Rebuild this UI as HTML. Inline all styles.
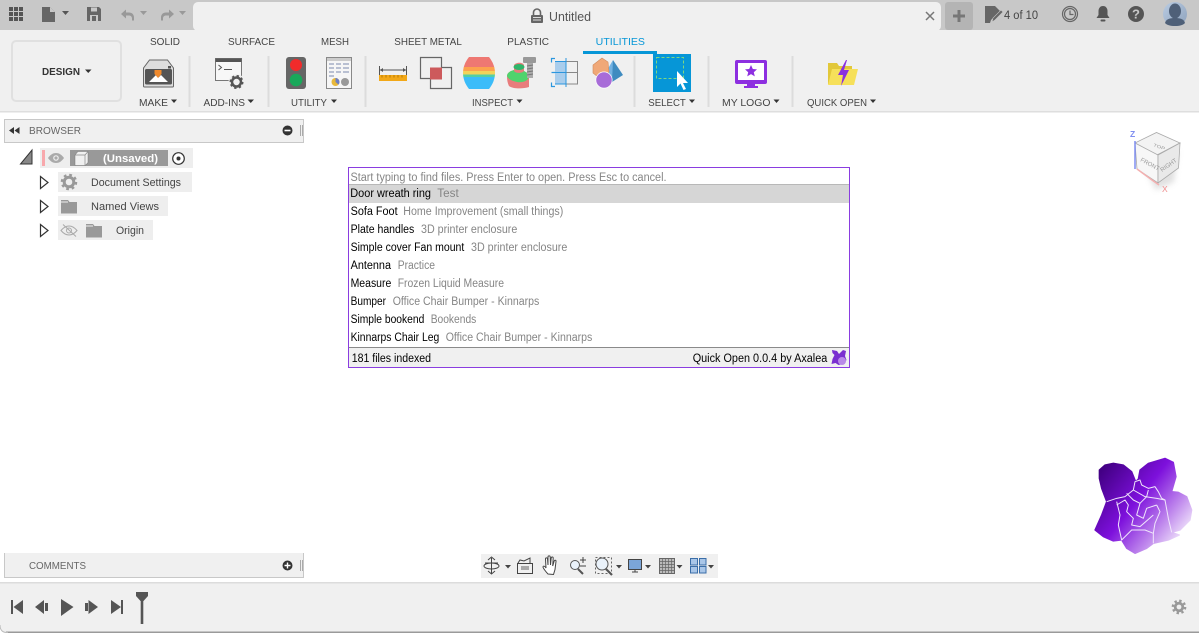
<!DOCTYPE html>
<html><head><meta charset="utf-8"><title>Untitled</title>
<style>
html,body{margin:0;padding:0;background:#fff;width:1199px;height:633px;overflow:hidden}
svg{display:block}
text{font-family:"Liberation Sans",sans-serif}
.t{font-size:10.5px;fill:#444}
.d{font-size:11.5px;fill:#000}
.g{font-size:11.5px;fill:#858585}
.tr{font-size:11px;fill:#444}
</style></head><body>
<svg width="1199" height="633" viewBox="0 0 1199 633" xmlns="http://www.w3.org/2000/svg">
<defs>
<linearGradient id="fl" gradientUnits="userSpaceOnUse" x1="40" y1="40" x2="300" y2="245"><stop offset="0" stop-color="#430085"/><stop offset=".42" stop-color="#7d10dc"/><stop offset=".72" stop-color="#bd84ec"/><stop offset="1" stop-color="#fbf8fe"/></linearGradient>
<filter id="bl" x="-30%" y="-30%" width="160%" height="160%"><feGaussianBlur stdDeviation="3"/></filter>
<linearGradient id="av" x1="0" y1="0" x2="1" y2="1"><stop offset="0" stop-color="#b9cbe2"/><stop offset="1" stop-color="#8fa3bd"/></linearGradient>
</defs>

<!-- title bar -->
<rect width="1199" height="30" fill="#c8c8c8"/>
<rect x="193" y="2" width="748" height="29" rx="5" fill="#f0f0f0"/>
<rect y="30" width="1199" height="81" fill="#f0f0f0"/>
<rect y="111" width="1199" height="1.5" fill="#dedede"/>
<g fill="#555"><rect x="9" y="7" width="4" height="4"/><rect x="14" y="7" width="4" height="4"/><rect x="19" y="7" width="4" height="4"/><rect x="9" y="12" width="4" height="4"/><rect x="14" y="12" width="4" height="4"/><rect x="19" y="12" width="4" height="4"/><rect x="9" y="17" width="4" height="4"/><rect x="14" y="17" width="4" height="4"/><rect x="19" y="17" width="4" height="4"/></g>
<path d="M42 7h8l5 5v10H42z" fill="#666"/><path d="M50 7v5h5z" fill="#c8c8c8"/>
<path d="M62 11h7l-3.500 4z" fill="#555"/>
<path d="M87 7h12l2 2v12H87z" fill="#666"/><rect x="91" y="7.500" width="6" height="4" fill="#c8c8c8"/><rect x="90" y="15" width="8" height="6" fill="#c8c8c8"/><rect x="92" y="16" width="4" height="5" fill="#666"/>
<path d="M121 14l5-4.500v3h3c3 0 5 2 5 5v3h-2v-2c0-2-1.500-3-3-3h-3v3z" fill="#999"/>
<path d="M140 11h7l-3.500 4z" fill="#999"/>
<path d="M174 14l-5-4.500v3h-3c-3 0-5 2-5 5v3h2v-2c0-2 1.500-3 3-3h3v3z" fill="#999"/>
<path d="M179 11h7l-3.500 4z" fill="#999"/>
<path d="M533.500 15v-2.500a3.500 3.500 0 0 1 7 0V15" fill="none" stroke="#666" stroke-width="1.600"/>
<rect x="531" y="15" width="12" height="8" rx="1" fill="#666"/><rect x="533" y="17" width="8" height="1" fill="#ddd"/><rect x="533" y="19.500" width="8" height="1" fill="#ddd"/>
<text x="549" y="21" font-size="12.500" fill="#555" textLength="42" lengthAdjust="spacingAndGlyphs">Untitled</text>
<path d="M926 12l8 8m0-8l-8 8" stroke="#777" stroke-width="1.500" fill="none"/>
<rect x="945" y="2" width="28" height="28" rx="3" fill="#b4b4b4"/>
<path d="M959 10v12m-6-6h12" stroke="#777" stroke-width="3" fill="none"/>
<path d="M985 6h10l5 5-9 9-1 3h-5z" fill="#666"/><path d="M992 22l1-4 8-8 2 2-8 8z" fill="#666" stroke="#c8c8c8" stroke-width=".6"/>
<text x="1004" y="19" font-size="11.500" fill="#444" textLength="34" lengthAdjust="spacingAndGlyphs">4 of 10</text>
<circle cx="1070" cy="14" r="7.500" fill="none" stroke="#666" stroke-width="1.200"/><circle cx="1070" cy="14" r="5.500" fill="none" stroke="#666" stroke-width="1.200"/><path d="M1070 10.500V14.500h3.500" fill="none" stroke="#666" stroke-width="1.200"/>
<path d="M1103 6c-3 0-4.500 2.500-4.500 5v4l-2 3h13l-2-3v-4c0-2.500-1.500-5-4.500-5z" fill="#555"/><rect x="1100.500" y="19.500" width="5" height="2" rx="1" fill="#555"/>
<circle cx="1136" cy="14" r="8" fill="#555"/><text x="1136" y="18.500" font-size="13" font-weight="bold" fill="#c8c8c8" text-anchor="middle">?</text>
<circle cx="1175" cy="14" r="12" fill="url(#av)"/><ellipse cx="1175" cy="11" rx="6" ry="7.500" fill="#4f6078"/><path d="M1165 23c1-4 5-5 10-5s9 1 10 5c-2 2-5 3-10 3s-8-1-10-3z" fill="#4f6078"/>

<!-- design -->
<rect x="12" y="41" width="109" height="60" rx="4" fill="#f0f0f0" stroke="#e0e0e0" stroke-width="2"/>
<text x="42" y="75" font-size="10.500" font-weight="bold" fill="#333" textLength="38" lengthAdjust="spacingAndGlyphs">DESIGN</text>
<path d="M85 69.500h6.500l-3.250 3.500z" fill="#333"/>
<!-- tabs -->
<text class="t" x="150" y="45" textLength="30" lengthAdjust="spacingAndGlyphs">SOLID</text>
<text class="t" x="228" y="45" textLength="47" lengthAdjust="spacingAndGlyphs">SURFACE</text>
<text class="t" x="321" y="45" textLength="28" lengthAdjust="spacingAndGlyphs">MESH</text>
<text class="t" x="394.300" y="45" textLength="67.500" lengthAdjust="spacingAndGlyphs">SHEET METAL</text>
<text class="t" x="507.300" y="45" textLength="41.700" lengthAdjust="spacingAndGlyphs">PLASTIC</text>
<text x="595.700" y="45" font-size="10.500" fill="#0696d7" textLength="49.300" lengthAdjust="spacingAndGlyphs">UTILITIES</text>
<rect x="583" y="51" width="74" height="3" fill="#0696d7"/>
<g fill="#dcdcdc"><rect x="188.500" y="56" width="2" height="51"/><rect x="267.500" y="56" width="2" height="51"/><rect x="364.500" y="56" width="2" height="51"/><rect x="633.500" y="56" width="2" height="51"/><rect x="707.500" y="56" width="2" height="51"/><rect x="791.500" y="56" width="2" height="51"/></g>
<text class="t" x="139" y="106" textLength="29" lengthAdjust="spacingAndGlyphs">MAKE</text><path d="M171 99.500h6l-3 3.500z" fill="#333"/>
<text class="t" x="203.500" y="106" textLength="41.500" lengthAdjust="spacingAndGlyphs">ADD-INS</text><path d="M247.500 99.500h6.500l-3.250 3.500z" fill="#333"/>
<text class="t" x="291" y="106" textLength="36" lengthAdjust="spacingAndGlyphs">UTILITY</text><path d="M331 99.500h6l-3 3.500z" fill="#333"/>
<text class="t" x="472" y="106" textLength="41" lengthAdjust="spacingAndGlyphs">INSPECT</text><path d="M516.500 99.500h6l-3 3.500z" fill="#333"/>
<text class="t" x="648.300" y="106" textLength="37.500" lengthAdjust="spacingAndGlyphs">SELECT</text><path d="M689 99.500h6l-3 3.500z" fill="#333"/>
<text class="t" x="722" y="106" textLength="48.500" lengthAdjust="spacingAndGlyphs">MY LOGO</text><path d="M773.500 99.500h6l-3 3.500z" fill="#333"/>
<text class="t" x="807" y="106" textLength="60" lengthAdjust="spacingAndGlyphs">QUICK OPEN</text><path d="M870 99.500h6l-3 3.500z" fill="#333"/>

<path d="M143.500 68l6-8h18l6 8v18a1 1 0 0 1-1 1h-28a1 1 0 0 1-1-1z" fill="#ddd" stroke="#666"/>
<rect x="145" y="69" width="27" height="15.500" rx="1.500" fill="#555"/><rect x="168" y="66" width="3" height="2.500" fill="#555"/>
<path d="M149 82l7-7 2.500 2.500L161 75l7 7z" fill="#fff"/><path d="M154.500 70h7v4l-3.500 4-3.500-4z" fill="#ef8a2e"/>
<rect x="215.500" y="58.500" width="26" height="22" fill="#f7f7f7" stroke="#777"/><rect x="215.500" y="58.500" width="26" height="3.500" fill="#555"/>
<path d="M218.500 65l3 2.500-3 2.500M224 69.500h8" fill="none" stroke="#555" stroke-width="1"/>
<circle cx="236.500" cy="82" r="8" fill="#f0f0f0"/><circle cx="236.500" cy="82" r="4.500" fill="none" stroke="#555" stroke-width="2.500"/><circle cx="236.500" cy="82" r="6" fill="none" stroke="#555" stroke-width="2" stroke-dasharray="2.300 2.400"/>
<rect x="286" y="57" width="20" height="32" rx="3" fill="#666"/><circle cx="296" cy="65" r="6" fill="#f22b2b"/><circle cx="296" cy="80" r="6.300" fill="#19a85a"/>
<rect x="326.500" y="57.500" width="25" height="31" fill="#f6f6f6" stroke="#888"/><rect x="327" y="58" width="24" height="3" fill="#ccc"/>
<g fill="#b9c0d2"><rect x="329" y="63" width="5" height="2"/><rect x="336" y="63" width="5" height="2"/><rect x="343" y="63" width="6" height="2"/><rect x="329" y="67" width="5" height="2"/><rect x="336" y="67" width="5" height="2"/><rect x="343" y="67" width="6" height="2"/><rect x="329" y="71" width="5" height="2"/><rect x="336" y="71" width="5" height="2"/><rect x="343" y="71" width="6" height="2"/><rect x="329" y="75" width="5" height="2"/></g>
<circle cx="335.500" cy="82" r="4" fill="#e8b83a"/><path d="M335.500 82v-4a4 4 0 0 1 3 6.600z" fill="#6d7fc4"/><circle cx="345" cy="82" r="4" fill="#999"/>
<path d="M379.500 66v9M406.500 66v9" stroke="#555" fill="none"/><path d="M380 70h26" stroke="#555" fill="none"/><path d="M380 70l3-2v4zM406 70l-3-2v4z" fill="#555"/>
<rect x="379" y="75" width="28" height="6" fill="#f2a818"/><path d="M382 75v2.500M386 75v2.500M390 75v2.500M394 75v2.500M398 75v2.500M402 75v2.500" stroke="#a66f00" stroke-width=".8"/>
<path d="M441.500 67.500V57.500H420.500v21H430" fill="none" stroke="#666" stroke-width="1.200"/><path d="M441.500 67.500H451.500v21H430.500V78.500" fill="none" stroke="#666" stroke-width="1.200"/><rect x="430" y="67.500" width="12" height="12" fill="#cd5a5c"/>
<clipPath id="z"><path d="M469 57h20c8 10 8 22 0 32h-20c-8-10-8-22 0-32z"/></clipPath>
<g clip-path="url(#z)"><rect x="460" y="57" width="38" height="10.500" fill="#ee7872"/><rect x="460" y="67" width="38" height="4" fill="#fca24e"/><rect x="460" y="71" width="38" height="3.500" fill="#f2d35a"/><rect x="460" y="74.500" width="38" height="2.500" fill="#52cfa5"/><rect x="460" y="77" width="38" height="12" fill="#3bbcf9"/></g>
<path d="M507 76c0-3 3-5 7-6v-5c2-3 9-3 10 0v6l5 3v13c-6 2-16 2-20-1-1.500-3-2-6-2-10z" fill="#e87c7c"/>
<path d="M507 76c1 3 5 5 10 6 5 1 11-1 12-5v-3l-5-3c-1 2-8 3-10 0v-1c-4 1-7 3-7 6z" fill="#50d36d"/>
<ellipse cx="519" cy="67" rx="5.500" ry="3" fill="#2fb56a"/>
<rect x="523" y="57" width="13" height="6" rx="1" fill="#999"/><rect x="527" y="63" width="6" height="15" fill="#aaa"/><path d="M527 66l6-1M527 69l6-1M527 72l6-1M527 75l6-1" stroke="#777"/>
<rect x="555" y="61" width="11" height="11" fill="#a9cdec"/><rect x="555" y="73" width="11" height="11" fill="#a9cdec"/>
<path d="M566 61.500h11.500v22.500H566M566 72.500h11.500" fill="none" stroke="#888"/>
<path d="M555 58.500h-3.500v4M555 86.500h-3.500v-4M555 72.500h-3.500" fill="none" stroke="#2b96de" stroke-width="1.200"/><path d="M566 58v29M555 61.500h11M555 84h11M555 72.500h11" stroke="#2b96de" fill="none"/>
<!-- shapes -->
<path d="M613 60l-7 12 6 10 2-2z" fill="#74b2e2"/><path d="M613 60l10 15-11 7z" fill="#3f8bc0"/>
<path d="M593 65l9-7 6 4 1 10-3 3-8 2-5-4z" fill="#f0a878" stroke="#d18a5c" stroke-width=".6"/>
<circle cx="604" cy="80" r="8.500" fill="#fff"/><circle cx="604" cy="80" r="7.800" fill="#a86cd8"/>
<!-- select -->
<rect x="653" y="54" width="38" height="38" fill="#0696d7"/>
<rect x="656.500" y="57.500" width="27" height="21" fill="none" stroke="#7fd87f" stroke-dasharray="3 2"/>
<path d="M677 71v16l3.500-3.500 3 6.500 2.500-1-3-6h5z" fill="#fff"/>
<rect x="735" y="60" width="32" height="24" rx="2" fill="#8d2fe0"/><rect x="738" y="63" width="26" height="17" fill="#fff"/>
<path d="M751 65l1.800 4 4.200.4-3.200 2.800 1 4.200-3.800-2.300-3.800 2.300 1-4.200-3.200-2.800 4.200-.4z" fill="#8d2fe0"/>
<path d="M747 84h8v2h3v2h-14v-2h3z" fill="#8d2fe0"/>
<path d="M828 63h9l2 3h13v18h-24z" fill="#e2c83a"/><path d="M832 69h26l-4 16h-26z" fill="#f6e05a"/>
<path d="M846 60l-8 15h5l-2 11 8-16h-5l3-10z" fill="#8a2fe0"/>

<!-- browser -->
<rect x="4.500" y="119.500" width="299" height="23" fill="#f0f0f0" stroke="#c8c8c8"/>
<path d="M9 130.500l5-3.500v7zM14.500 130.500l5-3.500v7z" fill="#333"/>
<text x="29" y="134" font-size="10.500" fill="#666" textLength="52" lengthAdjust="spacingAndGlyphs">BROWSER</text>
<circle cx="287.500" cy="130.500" r="5" fill="#333"/><rect x="284.500" y="129.700" width="6" height="1.600" fill="#fff"/>
<path d="M300.500 125v11M302.500 125v11" stroke="#aaa" fill="none"/>
<path d="M32 150v14H20.500z" fill="#888" stroke="#333" stroke-width="1"/>
<rect x="40" y="148" width="153" height="20" fill="#eee"/>
<rect x="42" y="150" width="3" height="16" fill="#f8a8ac"/>
<path d="M48 158c2.500-3.500 5-5 8-5s5.500 1.500 8 5c-2.500 3.500-5 5-8 5s-5.500-1.500-8-5z" fill="#aaa"/><circle cx="56" cy="158" r="2.800" fill="#eee"/><circle cx="56" cy="158" r="1.600" fill="#aaa"/>
<rect x="70" y="150" width="98" height="16" fill="#999"/>
<path d="M75 155l3-3.500h10v11l-3 3H75z" fill="#f0f0f0" stroke="#777" stroke-width=".5"/><path d="M75 155h10v11" fill="none" stroke="#888" stroke-width=".7"/><path d="M85 155l3-3.500" stroke="#888" stroke-width=".7"/>
<text x="103" y="162" font-size="11" font-weight="bold" fill="#fff" textLength="55" lengthAdjust="spacingAndGlyphs">(Unsaved)</text>
<circle cx="178.500" cy="158.500" r="5.800" fill="#fff" stroke="#333" stroke-width="1.200"/><circle cx="178.500" cy="158.500" r="2" fill="#333"/>

<path d="M40.500 176.500v12l7.500-6z" fill="#fff" stroke="#333" stroke-width="1.200"/>
<rect x="58" y="172" width="134" height="20" fill="#eee"/>
<circle cx="69" cy="182" r="4.800" fill="none" stroke="#999" stroke-width="3"/><circle cx="69" cy="182" r="7" fill="none" stroke="#999" stroke-width="2.500" stroke-dasharray="2.700 2.800"/>
<text class="tr" x="91" y="186" textLength="90" lengthAdjust="spacingAndGlyphs">Document Settings</text>

<path d="M40.500 200.500v12l7.500-6z" fill="#fff" stroke="#333" stroke-width="1.200"/>
<rect x="58" y="196" width="110" height="20" fill="#eee"/>
<path d="M61 200h7l1.500 2H77v11.500H61z" fill="#999"/><rect x="61" y="201.500" width="7" height="1" fill="#eee"/>
<text class="tr" x="91" y="210" textLength="68" lengthAdjust="spacingAndGlyphs">Named Views</text>

<path d="M40.500 224.500v12l7.500-6z" fill="#fff" stroke="#333" stroke-width="1.200"/>
<rect x="58" y="220" width="95" height="20" fill="#eee"/>
<path d="M61 230.500c2.500-3 5-4.500 8-4.500s5.500 1.500 8 4.500c-2.500 3-5 4.500-8 4.500s-5.500-1.500-8-4.500z" fill="none" stroke="#aaa"/><circle cx="69" cy="230.500" r="2.500" fill="none" stroke="#aaa"/><path d="M63 224.500l13 12" stroke="#aaa"/>
<path d="M86 224h7l1.500 2H102v11.500H86z" fill="#999"/><rect x="86" y="225.500" width="7" height="1" fill="#eee"/>
<text class="tr" x="116" y="234" textLength="28" lengthAdjust="spacingAndGlyphs">Origin</text>

<!-- dialog -->
<rect x="348.500" y="167.500" width="501" height="200" fill="#fff" stroke="#8a3de0"/>
<rect x="349" y="184" width="500" height="1" fill="#b8b8b8"/>
<rect x="349" y="185" width="500" height="18" fill="#d6d6d6"/>
<rect x="349" y="348" width="500" height="19" fill="#f0f0f0"/>
<rect x="349" y="347" width="500" height="1" fill="#8a8a8a"/>
<text class="g" x="350.500" y="181" textLength="316" lengthAdjust="spacingAndGlyphs">Start typing to find files. Press Enter to open. Press Esc to cancel.</text>
<text class="d" x="350.300" y="197" textLength="80.700" lengthAdjust="spacingAndGlyphs">Door wreath ring</text><text class="g" x="437.300" y="197" textLength="21.400" lengthAdjust="spacingAndGlyphs">Test</text>
<text class="d" x="350.600" y="215" textLength="47" lengthAdjust="spacingAndGlyphs">Sofa Foot</text><text class="g" x="403.300" y="215" textLength="160" lengthAdjust="spacingAndGlyphs">Home Improvement (small things)</text>
<text class="d" x="350.600" y="233" textLength="63.700" lengthAdjust="spacingAndGlyphs">Plate handles</text><text class="g" x="421" y="233" textLength="96.300" lengthAdjust="spacingAndGlyphs">3D printer enclosure</text>
<text class="d" x="350.600" y="251" textLength="113.700" lengthAdjust="spacingAndGlyphs">Simple cover Fan mount</text><text class="g" x="471" y="251" textLength="96.300" lengthAdjust="spacingAndGlyphs">3D printer enclosure</text>
<text class="d" x="350.600" y="269" textLength="40.400" lengthAdjust="spacingAndGlyphs">Antenna</text><text class="g" x="397.700" y="269" textLength="37.300" lengthAdjust="spacingAndGlyphs">Practice</text>
<text class="d" x="350.600" y="287" textLength="40.700" lengthAdjust="spacingAndGlyphs">Measure</text><text class="g" x="397.700" y="287" textLength="106.300" lengthAdjust="spacingAndGlyphs">Frozen Liquid Measure</text>
<text class="d" x="350.600" y="305" textLength="35.400" lengthAdjust="spacingAndGlyphs">Bumper</text><text class="g" x="392.700" y="305" textLength="146.600" lengthAdjust="spacingAndGlyphs">Office Chair Bumper - Kinnarps</text>
<text class="d" x="350.600" y="323" textLength="73.700" lengthAdjust="spacingAndGlyphs">Simple bookend</text><text class="g" x="430.700" y="323" textLength="45.600" lengthAdjust="spacingAndGlyphs">Bookends</text>
<text class="d" x="350.600" y="341" textLength="88.700" lengthAdjust="spacingAndGlyphs">Kinnarps Chair Leg</text><text class="g" x="445.700" y="341" textLength="146.600" lengthAdjust="spacingAndGlyphs">Office Chair Bumper - Kinnarps</text>
<text class="d" x="351.700" y="362" textLength="79.300" lengthAdjust="spacingAndGlyphs">181 files indexed</text>
<text class="d" x="692.700" y="362" textLength="134.600" lengthAdjust="spacingAndGlyphs">Quick Open 0.0.4 by Axalea</text>
<path d="M832 350l5 1 2 3 4-4 3 1-1 5 1.500 4-3 4-5 1-3-2-4 1 1-5 2-4-2-2z" fill="#7a2fd0"/><circle cx="842" cy="361" r="4" fill="#b98ae8"/>

<!-- flower -->
<g transform="translate(1090 455) scale(.33333)">
<path fill="url(#fl)" stroke="url(#fl)" stroke-width="4" stroke-linejoin="round" d="M28 45L45 30L70 25L100 30L125 50L137 80L145 72L150 45L175 25L225 10L250 22L258 65L245 110L265 112L290 125L305 165L300 195L270 225L245 232L268 240L235 255L190 265L170 280L135 295L110 280L95 255L70 258L40 245L15 225L35 180L50 140L35 100L28 70Z"/>
<g fill="none" stroke="#f0e6fb" stroke-width="3" stroke-linejoin="round">
<path d="M50 140L80 130L105 125L130 105L135 80L150 75L155 90L175 100L195 95L205 110L215 130L225 135L235 190L245 232"/>
<path d="M110 115L130 135L150 145L170 125L175 105"/>
<path d="M130 105L165 125L200 130L225 135"/>
<path d="M80 140L90 180L85 210L95 255L125 225L165 225L190 235L190 265"/>
<path d="M80 150L105 135L115 150L110 170L130 190L125 210L150 215L190 180"/>
<path d="M200 150L210 170L195 205L190 235"/>
<path d="M150 145L140 180L160 190L170 160L200 150"/>
</g></g>

<!-- viewcube -->
<path d="M1140 160l38-10-4 32-18 8z" fill="#aaa" opacity=".35" filter="url(#bl)"/>
<path d="M1135 143l21.500-10.500 23.500 10.500-23 12z" fill="#f3f3f3" stroke="#aaa" stroke-width=".8"/>
<path d="M1135 143l23 12v28l-21-14z" fill="#f7f7f7" stroke="#aaa" stroke-width=".8"/>
<path d="M1158 155l22-12-1.500 25-20.500 15z" fill="#e9e9e9" stroke="#aaa" stroke-width=".8"/>
<path d="M1135 141v28" stroke="#7f8ef0" stroke-width="1.500"/><path d="M1137 169l15 11 7 5" stroke="#f4b0b0" stroke-width="1.500"/>
<text x="1130" y="137" font-size="8.500" font-weight="bold" fill="#7f8ef0">Z</text>
<text x="1162" y="192" font-size="8.500" fill="#f08c8c">X</text>
<text font-size="6" fill="#999" transform="translate(1153 146) rotate(20) scale(1 .7)">TOP</text>
<text font-size="6" fill="#999" transform="translate(1140 161) rotate(28)">FRONT</text>
<text font-size="6" fill="#999" transform="translate(1162 172) rotate(-35)">RIGHT</text>

<!-- comments -->
<path d="M4.500 553v24.500h299V553" fill="#f0f0f0" stroke="#c8c8c8"/>
<text x="29" y="569" font-size="10.500" fill="#666" textLength="57" lengthAdjust="spacingAndGlyphs">COMMENTS</text>
<circle cx="287.500" cy="565.500" r="5" fill="#333"/><path d="M284.500 565.500h6M287.500 562.500v6" stroke="#fff" stroke-width="1.400"/>
<path d="M300.500 560v11M302.500 560v11" stroke="#aaa" fill="none"/>

<!-- nav bar -->
<rect x="481" y="554" width="237" height="24" fill="#f0f0f0"/>
<g fill="none" stroke="#444" stroke-width="1">
<path d="M491.500 558v16M485 563h13M488 560l3.500-3 3.500 3M488 571l3.500 3 3.500-3"/><ellipse cx="491.500" cy="566" rx="7.500" ry="3"/>
<rect x="517.500" y="563.500" width="15" height="10"/><path d="M518 563l2-3 4 1 6-3v5"/></g>
<rect x="521" y="566" width="8" height="4" fill="#aaa"/>
<path d="M548 574c-2-2-5-6-5-7 0-1.500 2-1 3 1l-.5-9c0-1.500 2-1.500 2 0l.5 6 0-8c0-1.500 2.200-1.500 2.200 0l.3 8 .7-7c.2-1.500 2.200-1.300 2 .2l-.5 7.800 1.500-5c.5-1.300 2 -.8 1.800.5l-1 8-1.500 5z" fill="#fff" stroke="#444"/>
<circle cx="575" cy="565" r="4.500" fill="#eaf2fa" stroke="#555"/><path d="M578 569l5 5" stroke="#555" stroke-width="2"/><path d="M580 560h6M583 557v6M580 566h6" stroke="#444" fill="none"/>
<rect x="595.500" y="557.500" width="16" height="16" fill="none" stroke="#666" stroke-dasharray="2 2"/><circle cx="602" cy="564" r="6" fill="#eaf2fa" stroke="#555"/><path d="M606 569l6 6" stroke="#555" stroke-width="2.200"/>
<rect x="628.500" y="559.500" width="13" height="10" fill="#7ba5d8" stroke="#444"/><path d="M632 572h6M635 570v2" stroke="#444"/>
<g><rect x="659.500" y="558.500" width="15" height="15" fill="#bbb" stroke="#666"/><path d="M662.500 558v16M665.500 558v16M668.500 558v16M671.500 558v16M659 561.500h16M659 564.500h16M659 567.500h16M659 570.500h16" stroke="#666" stroke-width=".7"/></g>
<g fill="#a9c6e8" stroke="#3b6ea8"><rect x="690.500" y="558.500" width="7" height="6.500"/><rect x="699.500" y="558.500" width="6.500" height="6.500"/><rect x="690.500" y="566.500" width="7" height="6.500"/><rect x="699.500" y="566.500" width="6.500" height="6.500"/></g>
<g fill="#444"><path d="M505 565h6l-3 3.500z"/><path d="M616 565h6l-3 3.500z"/><path d="M645 565h6l-3 3.500z"/><path d="M676.500 565h6l-3 3.500z"/><path d="M708 565h6l-3 3.500z"/></g>

<!-- timeline -->
<path d="M0 582.500h1199V633H10q-10 0-10-8z" fill="#f0f0f0"/>
<rect y="582" width="1199" height="1.500" fill="#dcdcdc"/>
<rect x="6" y="631.500" width="1193" height="1.500" fill="#9a9a9a"/>
<path d="M0 625q0 8 8 7.500" fill="none" stroke="#bbb"/>
<g fill="#555">
<rect x="11" y="600" width="2" height="14"/><path d="M13.500 607l9.500-7v14z"/>
<path d="M35 607l9-7v14z"/><rect x="45" y="603" width="3" height="8"/>
<path d="M61 599l12.500 8-12.500 9z"/>
<rect x="85" y="603" width="3" height="8"/><path d="M88.500 600l9.500 7-9.500 7z"/>
<path d="M111 600l10 7-10 7z"/><rect x="121" y="600" width="2" height="14"/>
<path d="M136 592h12v4l-4.500 5H140.500l-4.500-5z"/><rect x="140.700" y="600" width="2.600" height="24"/>
</g>
<circle cx="1179" cy="607" r="3.800" fill="none" stroke="#999" stroke-width="2.800"/><circle cx="1179" cy="607" r="6.200" fill="none" stroke="#999" stroke-width="2.300" stroke-dasharray="2.400 2.470"/>
</svg>
</body></html>
